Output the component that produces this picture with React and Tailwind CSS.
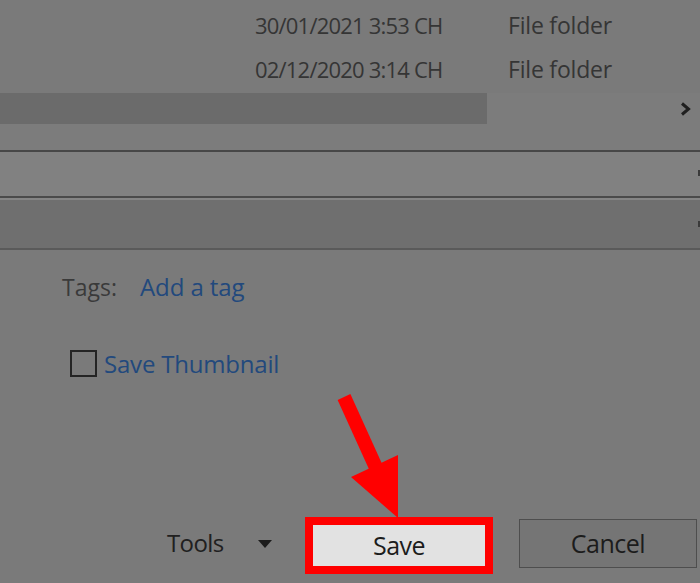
import React from 'react';

const rows = [
    { date: '30/01/2021 3:53 CH', type: 'File folder' },
    { date: '02/12/2020 3:14 CH', type: 'File folder' },
];

export default function App() {
    return (
        <div className="relative w-[700px] h-[583px] overflow-hidden bg-[#7a7a7a] font-['Open_Sans',sans-serif] text-[#2f2f2f]">
            {/* File list */}
            <div className="h-[93px] pt-[3px]">
                {rows.map((r) => (
                    <div key={r.date} className="flex h-[44px] items-center pl-[255px] leading-[44px]">
                        <span className="w-[253px] text-[22px] tracking-[-0.8px] text-[#353535]">{r.date}</span>
                        <span className="text-[23px] tracking-[-0.2px] text-[#353535]">{r.type}</span>
                    </div>
                ))}
            </div>

            {/* Horizontal scrollbar */}
            <div className="flex h-[31px]">
                <div className="w-[487px] bg-[#6b6b6b]" />
                <div className="flex flex-1 items-center justify-end bg-[#7c7c7c] pr-[9px]">
                    <svg width="11" height="14" viewBox="0 0 11 14">
                        <path d="M2 1.5 L8.5 7 L2 12.5" fill="none" stroke="#1f1f1f" strokeWidth="3" />
                    </svg>
                </div>
            </div>
            <div className="h-[26px] bg-[#7c7c7c]" />

            {/* Collapsed panes */}
            <div className="h-[2px] bg-[#474747]" />
            <div className="relative h-[44px] bg-[#818181]">
                <div className="absolute right-0 top-[18px] h-[6px] w-[2px] bg-[#3a3a3a]" />
            </div>
            <div className="h-[2px] bg-[#4a4a4a]" />
            <div className="h-[2px] bg-[#858585]" />
            <div className="relative h-[48px] bg-[#6f6f6f]">
                <div className="absolute right-0 top-[21px] h-[6px] w-[2px] bg-[#3a3a3a]" />
            </div>
            <div className="h-[2px] bg-[#5a5a5a]" />

            {/* Tags */}
            <div className="mt-[21px] flex h-[32px] items-center leading-[32px]">
                <span className="ml-[62px] w-[78px] text-[23px] text-[#3a3a3a]">Tags:</span>
                <span className="text-[24px] tracking-[-0.1px] text-[#22497d]">Add a tag</span>
            </div>

            {/* Save thumbnail */}
            <div className="mt-[47px] flex h-[27px] items-center leading-[27px]">
                <div className="ml-[70px] h-[27px] w-[27px] border-2 border-[#242424]" />
                <span className="ml-[7px] text-[24px] tracking-[-0.2px] text-[#22497d]">Save Thumbnail</span>
            </div>

            {/* Buttons */}
            <div className="mt-[140px] flex h-[57px] items-start">
                <div className="ml-[167px] flex h-[52px] w-[91px] items-center text-[24px] leading-[52px] tracking-[-0.6px] text-[#202020]">
                    Tools
                </div>
                <div className="flex h-[54px] items-center">
                    <svg width="14" height="8" viewBox="0 0 14 8">
                        <path d="M0 0 H14 L7 8 Z" fill="#1c1c1c" />
                    </svg>
                </div>
                <button className="ml-[33px] flex h-[57px] w-[188px] items-center justify-center border-[8px] border-[#ff0000] bg-[#e2e2e2] text-[25px] leading-none tracking-[-0.5px] text-[#1c1c1c]">
                    Save
                </button>
                <button className="ml-[26px] mt-[2px] flex h-[49px] w-[178px] items-center justify-center border-[1.5px] border-[#4e4e4e] bg-[#757575] text-[25px] leading-none tracking-[-0.5px] text-[#1c1c1c]">
                    Cancel
                </button>
            </div>

            {/* Red arrow pointing at Save */}
            <svg className="pointer-events-none absolute left-0 top-0" width="700" height="583" viewBox="0 0 700 583">
                <line x1="344" y1="397" x2="378" y2="472" stroke="#ff0000" strokeWidth="14" />
                <polygon points="351,477 398,455 398,518" fill="#ff0000" />
            </svg>
        </div>
    );
}
